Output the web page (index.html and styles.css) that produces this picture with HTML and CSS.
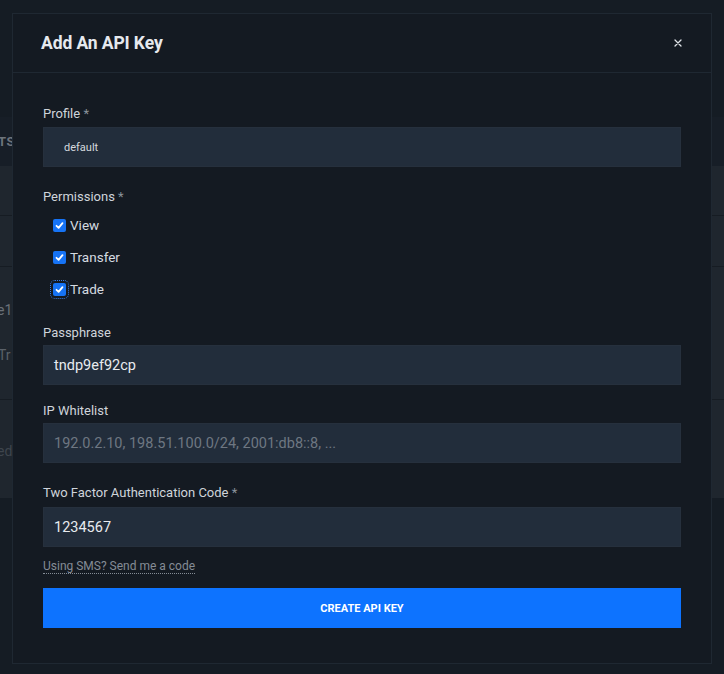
FILE: index.html
```html
<!DOCTYPE html>
<html>
<head>
<meta charset="utf-8">
<link rel="stylesheet" href="styles.css">
</head>
<body>
<div class="page">
  <div class="bg-head"><span class="bg-ts">TS</span></div>
  <div class="bg-table">
    <div class="bg-row r1"></div>
    <div class="bg-row r2"></div>
    <div class="bg-row r3"><span class="bg-t1">e1</span><span class="bg-t2">Tr</span></div>
    <div class="bg-row r4"><span class="bg-t3">ed</span></div>
  </div>
</div>

<div class="modal">
  <div class="modal-header">
    <h2 class="modal-title">Add An API Key</h2>
    <span class="close"><svg viewBox="0 0 8 8" width="8" height="8"><path d="M1 1 L7 7 M7 1 L1 7" stroke="#dfe3e8" stroke-width="1.3" stroke-linecap="round"/></svg></span>
  </div>
  <div class="modal-body">
    <div class="field f-profile">
      <label class="label">Profile <span class="req">*</span></label>
      <div class="input select">default</div>
    </div>
    <div class="field f-perm">
      <label class="label">Permissions <span class="req">*</span></label>
      <div class="checks">
        <div class="check"><span class="box"><svg viewBox="0 0 13 13" width="13" height="13"><path d="M3.5 6.8 L5.6 8.8 L9.5 4.2" fill="none" stroke="#fff" stroke-width="1.8" stroke-linecap="round" stroke-linejoin="round"/></svg></span>View</div>
        <div class="check"><span class="box"><svg viewBox="0 0 13 13" width="13" height="13"><path d="M3.5 6.8 L5.6 8.8 L9.5 4.2" fill="none" stroke="#fff" stroke-width="1.8" stroke-linecap="round" stroke-linejoin="round"/></svg></span>Transfer</div>
        <div class="check"><span class="box focus"><svg viewBox="0 0 13 13" width="13" height="13"><path d="M3.5 6.8 L5.6 8.8 L9.5 4.2" fill="none" stroke="#fff" stroke-width="1.8" stroke-linecap="round" stroke-linejoin="round"/></svg></span>Trade</div>
      </div>
    </div>
    <div class="field f-pass">
      <label class="label">Passphrase</label>
      <div class="input">tndp9ef92cp</div>
    </div>
    <div class="field f-ip">
      <label class="label">IP Whitelist</label>
      <div class="input placeholder">192.0.2.10, 198.51.100.0/24, 2001:db8::8, ...</div>
    </div>
    <div class="field f-2fa">
      <label class="label">Two Factor Authentication Code <span class="req">*</span></label>
      <div class="input">1234567</div>
    </div>
    <a class="sms">Using SMS? Send me a code</a>
    <button class="submit">CREATE API KEY</button>
  </div>
</div>
</body>
</html>
```

FILE: styles.css
```css
* { box-sizing: border-box; }
html, body {
  margin: 0;
  padding: 0;
  width: 724px;
  height: 674px;
  overflow: hidden;
  background: #151c24;
  font-family: Roboto, "Liberation Sans", sans-serif;
}

.page {
  position: relative;
  width: 724px;
  height: 674px;
  padding-top: 117px;
}
.bg-head {
  height: 49px;
  background: #171e27;
  display: flex;
  align-items: center;
}
.bg-ts {
  color: #6d747c;
  font-size: 13px;
  font-weight: 700;
  letter-spacing: 0.5px;
  margin-left: -2px;
}
.bg-table {
  background: #1f262e;
  height: 332px;
}
.bg-row {
  border-bottom: 1px solid #161c23;
  position: relative;
}
.r1 { height: 50px; }
.r2 { height: 51px; }
.r3 { height: 133px; }
.r4 { height: 97px; border-bottom: none; }
.bg-t1 { position: absolute; left: -3px; top: 35px; color: #6a7179; font-size: 14px; }
.bg-t2 { position: absolute; left: -2px; top: 80px; color: #5a6169; font-size: 14px; }
.bg-t3 { position: absolute; left: -3px; top: 43px; color: #3e454d; font-size: 14px; }

.modal {
  position: absolute;
  left: 12px;
  top: 13px;
  width: 700px;
  height: 651px;
  background: #141a22;
  border: 1px solid #1f2832;
}
.modal-header {
  height: 59px;
  border-bottom: 1px solid #1f2832;
  display: flex;
  align-items: center;
  justify-content: space-between;
  padding: 0 29px 0 28px;
}
.modal-title {
  margin: 0;
  font-size: 17.5px;
  font-weight: 700;
  color: #e6e9ee;
  letter-spacing: -0.1px;
}
.close { display: flex; }
.close svg { display: block; }
.modal-body {
  padding: 33px 30px 0 30px;
}
.label {
  display: block;
  font-size: 13px;
  line-height: 16px;
  color: #cfd4da;
  margin-bottom: 5px;
}
.req { color: #8a929b; }
.input {
  height: 40px;
  background: #222d3b;
  border: 1px solid #26303d;
  color: #e8ebef;
  font-size: 14.5px;
  display: flex;
  align-items: center;
  padding: 0 10px;
}
.select {
  font-size: 11px;
  padding-left: 20px;
  color: #d5d9de;
}
.placeholder { color: #6e7782; }

.f-perm { margin-top: 22px; }
.checks { padding-left: 10px; margin-top: -1px; }
.check {
  height: 32px;
  display: flex;
  align-items: center;
  font-size: 13.5px;
  color: #d5dae0;
}
.box {
  width: 13px;
  height: 13px;
  border-radius: 2px;
  background: #1673f5;
  display: inline-flex;
  margin-right: 4px;
}
.box svg { display: block; }
.box.focus { outline: 1px dotted #3a7be0; outline-offset: 2px; }

.f-pass { margin-top: 20px; }
.f-pass .label, .f-ip .label { margin-bottom: 4px; }
.f-ip { margin-top: 18px; }
.f-2fa { margin-top: 22px; }
.f-2fa .label { margin-bottom: 6px; }

.sms {
  display: block;
  width: fit-content;
  margin-top: 12px;
  font-size: 12px;
  line-height: 14px;
  color: #848c96;
  border-bottom: 1px dotted #848c96;
}
.submit {
  display: block;
  width: 100%;
  height: 40px;
  margin-top: 14px;
  background: #0d73ff;
  border: none;
  color: #ffffff;
  font-family: Roboto, "Liberation Sans", sans-serif;
  font-size: 11px;
  font-weight: 700;
}
```
